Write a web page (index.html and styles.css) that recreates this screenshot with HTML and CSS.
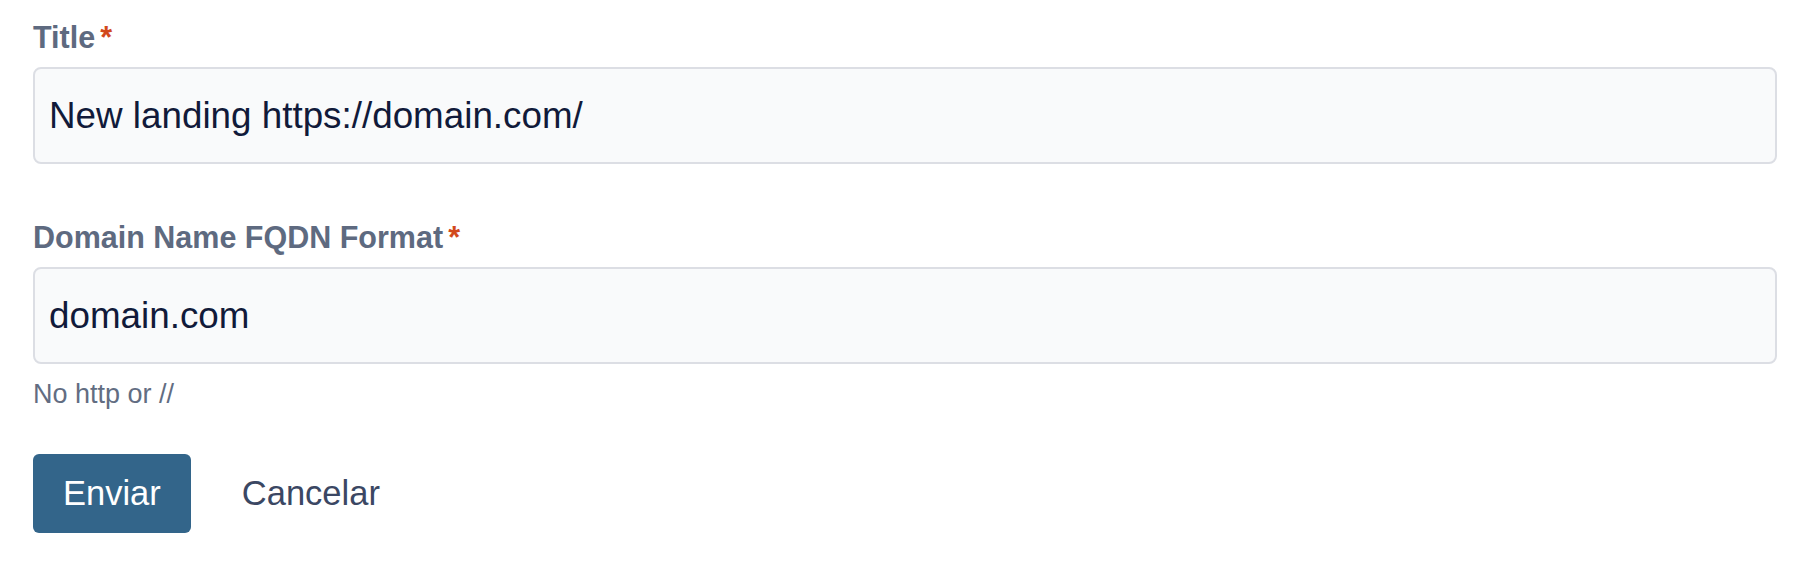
FILE: index.html
```html
<!DOCTYPE html>
<html lang="en">
<head>
    <meta charset="UTF-8">
    <meta name="viewport" content="width=device-width, initial-scale=1.0">
    <title>New landing</title>
    <link rel="stylesheet" href="styles.css">
</head>
<body>
    <form class="landing-form">
        <div class="field">
            <label for="title">Title<span class="required">*</span></label>
            <input type="text" id="title" value="New landing https://domain.com/">
        </div>

        <div class="field">
            <label for="domain">Domain Name FQDN Format<span class="required">*</span></label>
            <input type="text" id="domain" value="domain.com">
            <p class="help">No http or //</p>
        </div>

        <div class="actions">
            <button type="submit" class="btn-primary">Enviar</button>
            <button type="button" class="btn-link">Cancelar</button>
        </div>
    </form>
</body>
</html>
```

FILE: styles.css
```css
body {
    font-family: 'Liberation Sans', Arial, sans-serif;
    background-color: #ffffff;
    margin: 0;
    padding: 0;
}
.landing-form {
    width: 1744px;
    margin: 0 0 0 33px;
    padding-top: 19px;
}
.field {
    display: flex;
    flex-direction: column;
    margin-bottom: 55px;
}
.field label {
    font-size: 30.5px;
    line-height: 36px;
    font-weight: bold;
    color: #5e6a80;
    margin-bottom: 12px;
}
.required {
    color: #d2491c;
    margin-left: 5px;
}
.field input {
    box-sizing: border-box;
    height: 97px;
    padding: 0 14px;
    border: 2px solid #dcdee4;
    border-radius: 8px;
    background-color: #f9fafb;
    font-family: 'Liberation Sans', Arial, sans-serif;
    font-size: 36.8px;
    color: #111a3a;
}
.field .help {
    margin: 14px 0 0;
    font-size: 27px;
    line-height: 32px;
    color: #626d82;
}
.field:has(.help) {
    margin-bottom: 44px;
}
.actions {
    display: flex;
    align-items: center;
    gap: 21px;
}
.actions button {
    height: 79px;
    padding: 0 30px;
    font-family: 'Liberation Sans', Arial, sans-serif;
    font-size: 34.5px;
    border: none;
    border-radius: 6px;
    cursor: pointer;
}
.btn-primary {
    background-color: #33658a;
    color: white;
}
.btn-link {
    background: none;
    color: #3b4763;
}
```
